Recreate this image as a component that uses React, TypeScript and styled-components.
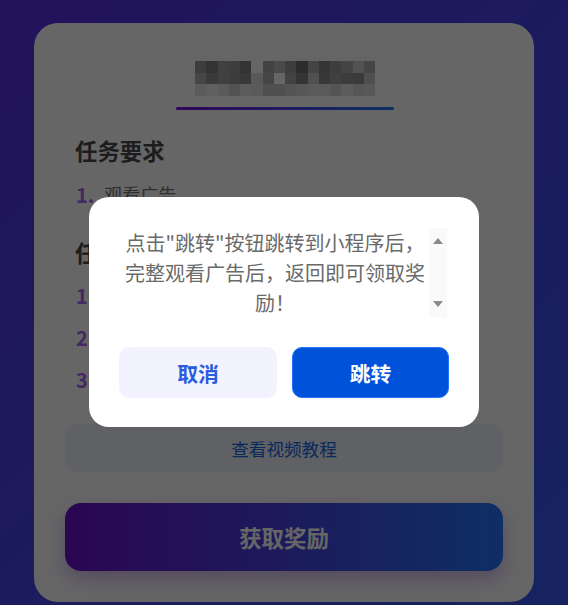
import React from "react";
import styled, { createGlobalStyle } from "styled-components";

const Global = createGlobalStyle`
  html, body { margin: 0; padding: 0; }
  body { font-family: "Microsoft YaHei", "Noto Sans CJK SC", "Noto Sans", sans-serif; }
  * { box-sizing: border-box; }
`;

const Page = styled.div`
  position: relative;
  width: 568px;
  height: 605px;
  overflow: hidden;
  padding: 23px 34px 3px;
  background: linear-gradient(135deg, #562fe6 0%, #3959f0 100%);
`;

const Card = styled.main`
  height: 579px;
  background: #fff;
  border-radius: 24px;
  padding: 34px 31px 0;
  display: flex;
  flex-direction: column;
`;

const TitleBlock = styled.header`
  display: flex;
  flex-direction: column;
  align-items: center;
  padding-left: 2px;
`;

const Mosaic = styled.svg`
  display: block;
  width: 190px;
  height: 42px;
`;

const Underline = styled.div`
  width: 218px;
  height: 3px;
  margin-top: 8px;
  border-radius: 2px;
  background: linear-gradient(90deg, #7a10e0, #2575fc);
`;

const SectionTitle = styled.h2`
  margin: 0;
  padding-left: 10px;
  font-size: 22.4px;
  line-height: 30px;
  font-weight: 700;
  color: #4a4a4a;
`;

const TopTitle = styled(SectionTitle)`
  margin-top: 25px;
`;

const NextTitle = styled(SectionTitle)`
  margin-top: 28px;
`;

const List = styled.ol<{ $lead: number }>`
  list-style: none;
  margin: ${(p) => p.$lead}px 0 0;
  padding: 0 0 0 11px;
  display: flex;
  flex-direction: column;
  gap: 12px;
`;

const Item = styled.li`
  display: flex;
  align-items: center;
  gap: 10px;
  height: 30px;
  font-size: 18px;
  color: #777;
`;

const Num = styled.span`
  font-size: 20px;
  font-weight: 700;
  color: #a864f4;
`;

const VideoButton = styled.button`
  position: absolute;
  left: 65px;
  top: 424px;
  width: 438px;
  height: 48px;
  border: 0;
  border-radius: 12px;
  background: #eef2fb;
  color: #2068e8;
  font: inherit;
  font-size: 17.6px;
`;

const RewardButton = styled.button`
  position: absolute;
  left: 65px;
  top: 503px;
  width: 438px;
  height: 68px;
  border: 0;
  border-radius: 16px;
  background: linear-gradient(90deg, #6a11cb, #2575fc);
  color: #fff;
  font: inherit;
  font-size: 22.4px;
  font-weight: 700;
  box-shadow: 0 8px 20px rgba(106, 17, 203, 0.3);
`;

const Overlay = styled.div`
  position: absolute;
  inset: 0;
  background: rgba(0, 0, 0, 0.6);
`;

const Modal = styled.div`
  position: absolute;
  left: 89px;
  top: 197px;
  width: 390px;
  height: 230px;
  background: #fff;
  border-radius: 20px;
  padding: 31px 30px 0;
  display: flex;
  flex-direction: column;
`;

const MessageRow = styled.div`
  display: flex;
  height: 89px;
`;

const Message = styled.p`
  flex: 1;
  margin: 0;
  padding: 0 0 0 2px;
  font-size: 20px;
  line-height: 30px;
  color: #6a6a6a;
  text-align: center;
`;

const ScrollTrack = styled.div`
  width: 18px;
  margin-right: 2px;
  background: #fafafa;
  display: flex;
  flex-direction: column;
  justify-content: space-between;
  align-items: center;
  padding: 10px 0;
`;

const Arrow = styled.span<{ $down?: boolean }>`
  width: 0;
  height: 0;
  border-left: 5px solid transparent;
  border-right: 5px solid transparent;
  ${(p) => (p.$down ? "border-top: 6px solid #8a8a8a;" : "border-bottom: 6px solid #8a8a8a;")}
`;

const Actions = styled.div`
  display: flex;
  gap: 15px;
  margin-top: 30px;
`;

const ModalButton = styled.button<{ $primary?: boolean }>`
  width: ${(p) => (p.$primary ? "157px" : "158px")};
  height: 51px;
  border-radius: 10px;
  border: ${(p) => (p.$primary ? "1px solid #2575fc" : "0")};
  background: ${(p) => (p.$primary ? "#0052d9" : "#f3f3ff")};
  color: ${(p) => (p.$primary ? "#fff" : "#2a5ce0")};
  font: inherit;
  font-size: 20.8px;
  font-weight: 700;
`;

const rows = [
  [0x64,0x65,0x64,0x65,0x64,0x66,0x66,0x65,0x65,0x64,0x65,0x65,0x64,0x64,0x64,0x63],
  [0x3d,0x33,0x40,0x3e,0x33,0x6a,0x43,0x4a,0x3e,0x2c,0x44,0x35,0x3d,0x44,0x52,0x45],
  [0x46,0x3a,0x40,0x3c,0x38,0x58,0x45,0x6a,0x42,0x34,0x50,0x38,0x40,0x3c,0x3a,0x50],
  [0x5c,0x60,0x5a,0x52,0x5c,0x5a,0x50,0x50,0x54,0x58,0x5a,0x5a,0x54,0x5c,0x56,0x58],
  [0x66,0x66,0x66,0x65,0x66,0x66,0x65,0x65,0x65,0x65,0x66,0x65,0x66,0x66,0x65,0x66],
];

const lift = (v: number) => {
  const c = Math.min(255, Math.round(v * 2.5));
  return `rgb(${c},${c},${c})`;
};

export default function App() {
  return (
    <Page>
      <Global />
      <Card>
        <TitleBlock>
          <Mosaic viewBox="0 0 190 42" shapeRendering="crispEdges" aria-label="title">
            {rows.map((row, y) =>
              row.map((v, x) => (
                <rect
                  key={`${x}-${y}`}
                  x={5 + x * 11.25}
                  y={y === 0 ? 0 : 4 + (y - 1) * 11.5}
                  width={11.25}
                  height={y === 0 || y === 4 ? 4 : 11.5}
                  fill={lift(v)}
                />
              ))
            )}
          </Mosaic>
          <Underline />
        </TitleBlock>
        <TopTitle>任务要求</TopTitle>
        <List $lead={14}>
          <Item><Num>1.</Num>观看广告</Item>
        </List>
        <NextTitle>任务</NextTitle>
        <List $lead={13}>
          <Item><Num>1.</Num></Item>
          <Item><Num>2.</Num></Item>
          <Item><Num>3.</Num></Item>
        </List>
      </Card>
      <VideoButton>查看视频教程</VideoButton>
      <RewardButton>获取奖励</RewardButton>
      <Overlay />
      <Modal>
        <MessageRow>
          <Message>点击"跳转"按钮跳转到小程序后，完整观看广告后，返回即可领取奖励！</Message>
          <ScrollTrack>
            <Arrow />
            <Arrow $down />
          </ScrollTrack>
        </MessageRow>
        <Actions>
          <ModalButton>取消</ModalButton>
          <ModalButton $primary>跳转</ModalButton>
        </Actions>
      </Modal>
    </Page>
  );
}
